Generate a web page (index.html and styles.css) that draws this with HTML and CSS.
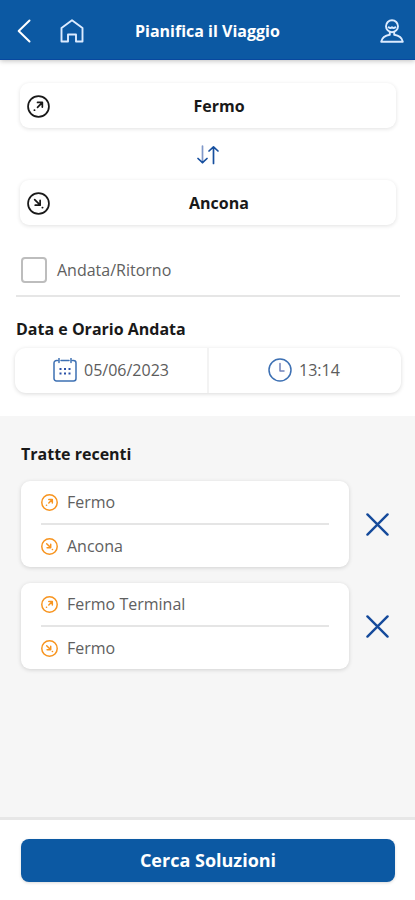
FILE: index.html
```html
<!DOCTYPE html>
<html lang="it">
<head>
<meta charset="utf-8">
<meta name="viewport" content="width=device-width, initial-scale=1">
<title>Pianifica il Viaggio</title>
<link rel="stylesheet" href="styles.css">
</head>
<body>
<svg class="defs" width="0" height="0" aria-hidden="true">
  <symbol id="depart" viewBox="0 0 24 24"><circle cx="12" cy="12" r="10.9"/><path d="M11 7.800h5v4.800M16 7.800l-5 5M7.700 15.800h.2"/></symbol>
  <symbol id="arrive" viewBox="0 0 24 24"><circle cx="12" cy="12" r="10.9"/><path d="M8 8l5.500 5.500M13.700 8.800v5H8.600M16 16.300h.3"/></symbol>
  <symbol id="cross" viewBox="0 0 24 24"><path d="M1.500 1.500l21 21M22.500 1.500l-21 21"/></symbol>
</svg>
<div class="app">
  <header class="topbar">
    <svg class="back" viewBox="0 0 14 24"><path d="M12.500 1.500L1.700 12l10.800 10.500"/></svg>
    <svg class="home" viewBox="0 0 24 24"><path d="M1.500 9L12 1.300 22.500 9v13.500h-6.500v-7H8v7H1.500z"/></svg>
    <h1 class="title">Pianifica il Viaggio</h1>
    <svg class="user" viewBox="0 0 24 24"><circle cx="12" cy="7.200" r="6"/><path d="M8.600 8.300q1.700 1.500 3.400 0 1.700 1.500 3.400 0M9.800 13v2.800C5 16.500 2 19 1.200 22.700h21.600c-.8-3.700-3.800-6.200-8.600-6.900V13"/></svg>
  </header>
  <main class="planner">
    <div class="stop"><svg class="stop-icon"><use href="#depart"/></svg><span class="stop-name">Fermo</span></div>
    <div class="swap"><svg viewBox="0 0 24 20"><path class="down" d="M6.500 1v16.500"/><path d="M2 13.500l4.500 4.200 4.500-4.200M17.500 18.500V2M13 6l4.500-4.200L22 6"/></svg></div>
    <div class="stop"><svg class="stop-icon"><use href="#arrive"/></svg><span class="stop-name">Ancona</span></div>
    <label class="roundtrip"><span class="box"></span><span class="roundtrip-text">Andata/Ritorno</span></label>
    <h2 class="when-title">Data e Orario Andata</h2>
    <div class="when">
      <div class="when-cell date">
        <svg viewBox="0 0 24 24"><path d="M4.500 2.500H3.500a2.500 2.500 0 0 0-2.500 2.500v15.500A2.500 2.500 0 0 0 3.500 23h17a2.500 2.500 0 0 0 2.500-2.500V5a2.500 2.500 0 0 0-2.500-2.500H19.500M8 2.500h8M6 .5v4M18 .5v4"/><path class="dots" d="M6.500 11h2M11 11h2M15.500 11h2M6.500 15.500h2M11 15.500h2M15.500 15.500h2"/></svg>
        <span>05/06/2023</span>
      </div>
      <div class="when-cell time">
        <svg viewBox="0 0 24 24"><circle cx="12" cy="12" r="11"/><path class="hands" d="M12 5.500V13h4"/></svg>
        <span class="time-text">13:14</span>
      </div>
    </div>
  </main>
  <section class="recent">
    <h2 class="recent-title">Tratte recenti</h2>
    <div class="route-row">
      <div class="route">
        <div class="leg"><svg><use href="#depart"/></svg><span>Fermo</span></div>
        <div class="leg"><svg><use href="#arrive"/></svg><span>Ancona</span></div>
      </div>
      <svg class="remove"><use href="#cross"/></svg>
    </div>
    <div class="route-row">
      <div class="route">
        <div class="leg"><svg><use href="#depart"/></svg><span>Fermo Terminal</span></div>
        <div class="leg"><svg><use href="#arrive"/></svg><span>Fermo</span></div>
      </div>
      <svg class="remove"><use href="#cross"/></svg>
    </div>
  </section>
  <footer class="actions"><button class="search" type="button">Cerca Soluzioni</button></footer>
</div>
</body>
</html>
```
FILE: styles.css
```css
* { box-sizing: border-box; }
body { margin: 0; background: #fff; font-family: "Open Sans", "Noto Sans", sans-serif; font-size: 16px; line-height: 20px; color: #191919; }
svg { fill: none; stroke: currentColor; stroke-linecap: round; stroke-linejoin: round; flex: none; }
h1, h2 { margin: 0; font-size: 16px; font-weight: 700; }
.defs { display: block; }
.app { display: flex; flex-direction: column; height: 900px; overflow: hidden; }

.topbar { display: flex; align-items: center; height: 60px; padding: 2px 11px 0 17px; background: #0c59a3; border-bottom: 1px solid #0848a0; color: #fff; box-shadow: 0 1px 5px rgba(0, 0, 0, .25); }
.back { width: 14px; height: 24px; stroke-width: 2; }
.home { width: 24px; height: 24px; margin-left: 29px; stroke-width: 1.900; color: #dcebff; }
.title { flex: 1; margin-left: 51px; white-space: nowrap; }
.user { width: 24px; height: 24px; stroke-width: 1.900; color: #dcebff; }

.planner { height: 356px; padding: 23px 14px 0 15px; }
.stop { display: flex; align-items: center; height: 45px; margin: 0 5px; padding-left: 7px; border-radius: 9px; background: #fff; box-shadow: 0 1px 4px rgba(0, 0, 0, .12); }
.stop-icon { width: 23px; height: 23px; margin-top: 1px; stroke-width: 1.800; }
.stop-name { flex: 1; padding-right: 8px; text-align: center; font-weight: 700; }
.swap { display: flex; justify-content: center; align-items: center; height: 52px; color: #164f9f; }
.swap svg { width: 24px; height: 20px; margin-top: 1px; stroke-width: 1.700; }
.swap .down { stroke: #8098c9; }
.roundtrip { display: flex; align-items: center; gap: 10px; height: 72px; margin: 0 1px; padding: 20px 0 0 5px; border-bottom: 2px solid #e6e6e6; }
.box { width: 26px; height: 26px; border: 2px solid #bdbdbd; border-radius: 4px; }
.roundtrip-text { color: #606060; }
.when-title { margin: 22px 0 0 1px; }
.when { display: grid; grid-template-columns: 194px 1fr; height: 45px; margin-top: 9px; border-radius: 11px; box-shadow: 0 1px 4px rgba(0, 0, 0, .15); color: #3d70b3; }
.when-cell { display: flex; align-items: center; padding-bottom: 1px; }
.when-cell span { color: #5c5c5c; }
.when-cell svg { width: 24px; height: 24px; stroke-width: 1.500; }
.date { padding-left: 38px; gap: 7px; border-right: 2px solid #f3f3f3; }
.time { padding-left: 59px; gap: 7px; }
.dots { stroke-width: 2; stroke-linecap: butt; stroke: #2a51a8; }
.hands { stroke: #7182bb; }

.recent { flex: 1; padding: 28px 21px 0; background: #f6f6f6; }
.route-row { display: flex; align-items: center; margin-bottom: 16px; }
.recent-title + .route-row { margin-top: 17px; }
.route { width: 328px; height: 86px; padding: 0 20px; border-radius: 9px; background: #fff; box-shadow: 0 1px 4px rgba(0, 0, 0, .15); }
.leg { display: flex; align-items: center; gap: 9px; height: 42px; color: #f7941f; }
.leg:first-child { height: 44px; border-bottom: 2px solid #e5e5e5; }
.leg svg { width: 17px; height: 17px; stroke-width: 2.100; }
.leg span { color: #606060; }
.remove { width: 23px; height: 23px; margin: 1px 0 0 17px; stroke-width: 2.500; color: #154a9b; }

.actions { height: 83px; padding: 19px 20px 0 21px; border-top: 3px solid #e7e7e7; background: #fff; }
.search { display: block; width: 374px; height: 43px; padding: 0; border: 0; border-radius: 8px; background: #0c59a3; color: #fff; font: 700 18px/43px "Open Sans", sans-serif; box-shadow: 0 1px 3px rgba(0, 0, 0, .15); }
```
